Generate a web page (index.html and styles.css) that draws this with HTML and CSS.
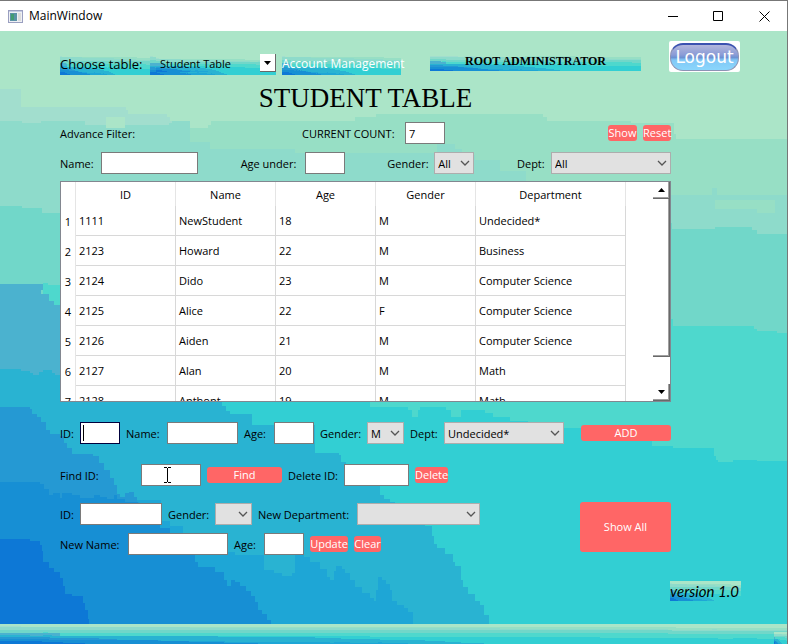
FILE: index.html
```html
<!DOCTYPE html>
<html lang="en">
<head>
<meta charset="utf-8">
<title>MainWindow</title>
<link rel="stylesheet" href="styles.css">
</head>
<body>
<svg class="defs" aria-hidden="true">
  <symbol id="wave" viewBox="0 31 787 593" preserveAspectRatio="none">
    <g shape-rendering="crispEdges">
      <rect y="31" width="787" height="593" fill="#abe5c8"/>
      <path fill="#a2dece" d="M0 89H21V107H126V110H128V114H167V117H170V121H172V130H0Z"/>
      <path fill="#97dfc5" d="M172 121H190V128H208V125H211V121H355V117H376V114H543V117H547V121H631V123H674V134H676V139H787V300H172Z"/>
      <path fill="#8edbcb" d="M0 121H22V123H41V121H85V125H169V123H172V121H190V142H210V149H295V153H437V144H455V149H462V155H475V160H500V171H526V181H668V195H712V188H717V195H787V300H0Z"/>
      <rect x="106" y="117" width="19" height="11" fill="#abe5c8"/>
      <path fill="#97dfc5" d="M715 200H775V213H757V209H715Z"/>
      <path fill="#71d7c9" d="M0 206H22V208H42V213H60V223H672V229H715V227H752V230H757V234H787V500H0Z"/>
      <path fill="#4ed8cd" d="M43 283H48V285H60V300H668V319H673V326H754V329H757V331H777V333H787V600H43Z"/>
      <path fill="#32cfd3" d="M60 395H370V407H408V410H412V417H418V410H420V407H446V410H451V417H461V410H485V413H493V417H510V421H528V424H563V428H600V435H652V446H673V448H714V456H716V460H718V462H733V460H757V461H787V624H60Z"/>
      <path fill="#4bb2cf" d="M0 284H43V290H41V294H49V301H54V305H60V400H0Z"/>
      <path fill="#29b3d2" d="M0 369H21V371H30V373H33V375H39V372H43V370H52V373H55V375H60V395H218V402H222V406H226V411H230V414H252V425H315V453H339V455H341V462H346V466H350V476H366V484H379V486H380V495H384V499H390V502H395V518H425V526H432V536H434V544H437V548H445V554H453V562H455V566H461V580H463V587H468V594H475V601H480V605H484V615H489V624H0Z"/>
      <path fill="#1ea6d6" d="M100 500H161V521H170V526H183V533H189V537H223V546H225V552H235V555H264V570H274V573H282V576H292V573H295V553H304V557H310V562H320V569H327V577H330V580H334V571H336V566H342V569H345V573H350V580H355V587H362V593H370V598H374V601H376V590H378V577H382V580H386V584H390V590H392V601H397V605H404V608H408V612H413V624H100Z"/>
      <path fill="#2599d3" d="M0 407H30V409H32V414H37V417H41V422H46V430H50V434H60V436H64V443H67V448H72V454H93V456H99V463H104V470H110V478H114V485H117V494H120V497H125V493H129V492H134V497H137V502H139V510H0Z"/>
      <path fill="#178fd4" d="M0 482H40V484H44V489H49V495H53V493H60V498H62V493H72V495H80V498H94V495H100V497H107V499H114V495H117V499H125V502H138V507H144V509H154V516H158V522H160V528H170V534H178V541H183V548H189V555H195V562H198V567H215V572H224V580H227V586H231V580H235V582H240V586H246V591H251V596H255V602H258V610H262V614H267V620H271V624H0Z"/>
      <path fill="#0d78d6" d="M0 539H30V541H40V545H42V551H43V562H49V568H54V572H60V578H63V586H65V594H72V596H83V603H85V610H88V619H89V624H0Z"/>
    </g>
  </symbol>
  <symbol id="chevron" viewBox="0 0 10 6"><path d="M1 1l4 4 4-4" fill="none" stroke="#555" stroke-width="1.3"/></symbol>
</svg>

<div class="window">
  <header class="titlebar">
    <svg class="app-icon" viewBox="0 0 15 13" aria-hidden="true">
      <rect x=".5" y=".5" width="14" height="12" fill="#eef0f4" stroke="#9a9fc0"/>
      <rect x="1" y="1" width="13" height="1" fill="#c4cbe4"/>
      <rect x="2" y="3" width="7" height="8" fill="#5b93a6"/>
      <rect x="3" y="4" width="3" height="6" fill="#439c72"/>
      <rect x="10" y="3" width="3" height="8" fill="#dcdcdc"/>
    </svg>
    <span class="caption">MainWindow</span>
    <button class="win-btn" aria-label="Minimize"><svg viewBox="0 0 11 11"><path d="M1 5.500H11"/></svg></button>
    <button class="win-btn" aria-label="Maximize"><svg viewBox="0 0 11 11"><path d="M.5 .5H9.500V9.500H.5Z"/></svg></button>
    <button class="win-btn" aria-label="Close"><svg viewBox="0 0 11 11"><path d="M.5 .5l10 10M10.500 .5l-10 10"/></svg></button>
  </header>

  <main class="body">
    <svg class="fill" aria-hidden="true"><use href="#wave"/></svg>

    <div class="top">
      <div class="strip choose"><svg class="fill" aria-hidden="true"><use href="#wave"/></svg><label for="table">Choose table:</label></div>
      <div class="strip combo">
        <svg class="fill" aria-hidden="true"><use href="#wave"/></svg>
        <svg class="combo-edit" aria-hidden="true"><use href="#wave"/></svg>
        <select id="table"><option>Student Table</option></select>
        <div class="drop"><svg viewBox="0 0 7 4"><path d="M0 0h7L3.500 4z"/></svg></div>
      </div>
      <a class="strip account" href="#account"><svg class="fill" aria-hidden="true"><use href="#wave"/></svg><span>Account Management</span></a>
      <div class="strip role"><svg class="fill" aria-hidden="true"><use href="#wave"/></svg><span>ROOT ADMINISTRATOR</span></div>
      <button class="logout"><span>Logout</span></button>
    </div>

    <div class="content">
      <h1>STUDENT TABLE</h1>

      <div class="row count-row">
        <span>Advance Filter:</span>
        <label for="count">CURRENT COUNT:</label>
        <input id="count" value="7">
        <button class="btn show">Show</button>
        <button class="btn">Reset</button>
      </div>

      <div class="filters">
        <div class="pair"><label for="f-name" class="l-name">Name:</label><input id="f-name" class="w-name"></div>
        <div class="pair"><label for="f-age" class="l-age">Age under:</label><input id="f-age" class="w-age"></div>
        <div class="pair"><label for="f-gender" class="l-gender">Gender:</label><div class="sel w-age"><select id="f-gender"><option>All</option></select><svg><use href="#chevron"/></svg></div></div>
        <div class="pair"><label for="f-dept" class="l-dept">Dept:</label><div class="sel w-dept"><select id="f-dept"><option>All</option></select><svg><use href="#chevron"/></svg></div></div>
      </div>

      <div class="table-view">
        <table>
          <colgroup><col class="c-num"><col class="c"><col class="c"><col class="c"><col class="c"><col class="c-dept"></colgroup>
          <thead><tr><th></th><th>ID</th><th>Name</th><th>Age</th><th>Gender</th><th>Department</th></tr></thead>
          <tbody>
            <tr><th>1</th><td>1111</td><td>NewStudent</td><td>18</td><td>M</td><td>Undecided*</td></tr>
            <tr><th>2</th><td>2123</td><td>Howard</td><td>22</td><td>M</td><td>Business</td></tr>
            <tr><th>3</th><td>2124</td><td>Dido</td><td>23</td><td>M</td><td>Computer Science</td></tr>
            <tr><th>4</th><td>2125</td><td>Alice</td><td>22</td><td>F</td><td>Computer Science</td></tr>
            <tr><th>5</th><td>2126</td><td>Aiden</td><td>21</td><td>M</td><td>Computer Science</td></tr>
            <tr><th>6</th><td>2127</td><td>Alan</td><td>20</td><td>M</td><td>Math</td></tr>
            <tr><th>7</th><td>2128</td><td>Anthont</td><td>19</td><td>M</td><td>Math</td></tr>
          </tbody>
        </table>
        <div class="scroll">
          <button aria-label="Scroll up"><svg viewBox="0 0 7 4"><path d="M0 4h7L3.500 0z"/></svg></button>
          <div class="thumb"></div>
          <div class="track"></div>
          <button aria-label="Scroll down"><svg viewBox="0 0 7 4"><path d="M0 0h7L3.500 4z"/></svg></button>
        </div>
      </div>

      <div class="row add-row">
        <label for="a-id">ID:</label><div class="caret"><input id="a-id" class="focused"></div>
        <label for="a-name">Name:</label><input id="a-name">
        <label for="a-age">Age:</label><input id="a-age">
        <label for="a-gender">Gender:</label><div class="sel"><select id="a-gender"><option>M</option></select><svg><use href="#chevron"/></svg></div>
        <label for="a-dept">Dept:</label><div class="sel"><select id="a-dept"><option>Undecided*</option></select><svg><use href="#chevron"/></svg></div>
        <button class="btn add">ADD</button>
      </div>

      <div class="row find-row">
        <label for="find">Find ID:</label>
        <div class="pointer"><input id="find"><svg viewBox="0 0 7 16" aria-hidden="true"><path d="M0 .5H3M4 .5H7M3.500 1V15M0 15.500H3M4 15.500H7"/></svg></div>
        <button class="btn">Find</button>
        <label for="del">Delete ID:</label><input id="del">
        <button class="btn">Delete</button>
      </div>

      <div class="update">
        <div class="update-rows">
          <div class="row up1">
            <label for="u-id">ID:</label><input id="u-id">
            <label for="u-gender">Gender:</label><div class="sel"><select id="u-gender"><option></option></select><svg><use href="#chevron"/></svg></div>
            <label for="u-dept">New Department:</label><div class="sel"><select id="u-dept"><option></option></select><svg><use href="#chevron"/></svg></div>
          </div>
          <div class="row up2">
            <label for="u-name">New Name:</label><input id="u-name">
            <label for="u-age">Age:</label><input id="u-age">
            <button class="btn">Update</button>
            <button class="btn">Clear</button>
          </div>
        </div>
        <button class="btn show-all">Show All</button>
      </div>
    </div>

    <div class="strip version"><svg class="fill" aria-hidden="true"><use href="#wave"/></svg><span>version 1.0</span></div>
  </main>

  <footer class="statusbar">
    <svg class="fill" aria-hidden="true"><use href="#wave"/></svg>
    <svg class="grip" aria-hidden="true"><use href="#wave"/></svg>
  </footer>
</div>
</body>
</html>
```
FILE: styles.css
```css
* { box-sizing: border-box; }

body {
  margin: 0;
  font: 11px/16px "Open Sans", "Noto Sans", sans-serif;
  color: #000;
}

.defs { position: absolute; width: 0; height: 0; }

button, input, select { font: inherit; color: inherit; margin: 0; border-radius: 0; }

.window {
  min-height: 100vh;
  display: flex;
  flex-direction: column;
  border-top: 1px solid #777;
  border-right: 1px solid #777;
}

/* Title bar */
.titlebar {
  display: flex;
  align-items: center;
  height: 30px;
  padding-left: 8px;
  background: #fff;
}
.app-icon { width: 15px; height: 13px; }
.caption { flex: 1; margin-left: 6px; font-size: 12px; }
.win-btn {
  width: 46px;
  height: 29px;
  padding: 0;
  border: 0;
  background: none;
}
.win-btn svg { display: block; width: 11px; height: 11px; margin: 0 auto; }
.win-btn path { fill: none; stroke: #000; }

/* Painted surfaces */
.body { position: relative; flex: 1; padding: 10px 46px 0 60px; }
.fill { position: absolute; inset: 0; width: 100%; height: 100%; }
.strip { position: relative; white-space: nowrap; }
.strip > span, .strip > label { position: relative; }

/* Top row */
.top {
  position: relative;
  display: flex;
  align-items: flex-start;
  height: 34px;
  padding-right: 1px;
}
.top .strip { margin-top: 13px; height: 21px; line-height: 20px; }
.choose { width: 90px; font-size: 13px; }
.combo { width: 126px; margin-right: 6px; }
.combo-edit { position: absolute; left: 6px; top: 3px; width: 104px; height: 15px; }
.combo select {
  position: relative;
  display: block;
  width: 100%;
  height: 20px;
  padding: 0 10px;
  border: 0;
  background: none;
  appearance: none;
}
.drop {
  position: absolute;
  right: 0;
  top: 0;
  width: 16px;
  height: 18px;
  background: #fff;
  border: solid #696969;
  border-width: 0 1px 1px 0;
  pointer-events: none;
}
.drop svg { display: block; width: 7px; height: 4px; margin: 7px auto 0; }
.account { width: 119px; color: #fff; font-size: 12px; text-decoration: none; }
.top .role {
  flex: 1;
  height: 17px;
  margin: 13px 28px 0 29px;
  text-align: center;
  font: 900 12px/14px "Liberation Serif", serif;
}
.logout {
  width: 71px;
  height: 31px;
  padding: 1px;
  border: 0;
  border-radius: 2px;
  background: #fff;
}
.logout span {
  display: block;
  height: 28px;
  border: 1px solid #8d93b4;
  border-top: 2px solid #3b52b0;
  border-radius: 13px;
  background: linear-gradient(#b3b6dc, #8a9bd6 40%, #6d92d2 50%, #82c8f6 60%, #8ad6fc);
  color: #fff;
  font: 17px/24px "DejaVu Sans", sans-serif;
}

/* Content */
.content { position: relative; margin-right: 70px; }
h1 {
  margin: 0;
  height: 47px;
  font: 400 27px/47px "Liberation Serif", serif;
  text-align: center;
}
.row { display: grid; align-items: center; gap: 6px; }
label, .row > span { white-space: nowrap; }
.row > label, .row > span, .pair > label { padding-top: 2px; }

input {
  display: block;
  width: 100%;
  height: 22px;
  padding: 1px 3px 0;
  border: 1px solid #7a7a7a;
  background: #fff;
  outline: 0;
}
input.focused { border-color: #00003c; }
.sel { position: relative; }
.sel select {
  display: block;
  width: 100%;
  height: 22px;
  padding: 2px 3px 0;
  border: 1px solid #adadad;
  background: #e1e1e1;
  appearance: none;
}
.sel svg {
  position: absolute;
  right: 4px;
  top: 8px;
  width: 10px;
  height: 6px;
  pointer-events: none;
}

.btn {
  height: 16px;
  padding: 0;
  border: 0;
  border-radius: 3px;
  background: #ff6666;
  color: #fff;
  line-height: 16px;
  white-space: nowrap;
}

.count-row { grid-template-columns: 236px 97px 40px 1fr 28px; }
.show { width: 29px; justify-self: end; }

.filters { display: flex; justify-content: space-between; margin: 8px 0 7px; }
.pair { display: flex; align-items: center; gap: 6px; }
.l-name { width: 35px; }
.l-age { width: 58px; }
.l-gender { width: 41px; }
.l-dept { width: 28px; }
.w-name { width: 97px; }
.w-age { width: 40px; }
.w-dept { width: 120px; }

/* Table */
.table-view {
  display: flex;
  justify-content: space-between;
  height: 221px;
  overflow: hidden;
  border: 1px solid #828790;
  background: #fff;
}
table { width: 565px; table-layout: fixed; border-collapse: separate; border-spacing: 0; }
.c-num { width: 15px; }
.c { width: 100px; }
.c-dept { width: 150px; }
th { padding: 2px 0 0; font-weight: 400; border-right: 1px solid #e5e5e5; }
thead th { height: 24px; }
td {
  height: 30px;
  padding: 0 3px;
  border: solid #d8d8d8;
  border-width: 0 1px 1px 0;
}
.scroll { display: flex; flex-direction: column; width: 17px; }
.scroll button, .thumb {
  padding: 0;
  border: solid #696969;
  border-width: 0 1px 1px 0;
  background: #fff;
  box-shadow: inset -1px -1px #a0a0a0;
}
.scroll button { height: 17px; }
.scroll svg { display: block; width: 7px; height: 4px; margin: 0 auto; }
.thumb { flex: 158; }
.track { flex: 27; }

/* Forms */
.add-row {
  margin-top: 20px;
  grid-template-columns: 14px 40px 35px 71px 24px 40px 41px 37px 28px 120px 1fr;
}
.add { width: 90px; justify-self: end; }
.caret, .pointer { position: relative; }
.caret::after {
  content: "";
  position: absolute;
  left: 3px;
  top: 3px;
  width: 1px;
  height: 16px;
  background: #000;
}
.find-row { margin-top: 20px; grid-template-columns: 75px 60px 75px 50px 65px 33px; }
.pointer svg { position: absolute; left: 23px; top: 3px; width: 7px; height: 16px; }
.pointer path { fill: none; stroke: #000; }

.update { display: flex; justify-content: space-between; align-items: flex-start; margin-top: 16px; }
.up1 { margin-top: 1px; grid-template-columns: 14px 82px 41px 37px 93px 123px; }
.up2 { margin-top: 8px; grid-template-columns: 62px 100px 24px 40px 38px 27px; }
.show-all { width: 91px; height: 50px; }

.version {
  width: 71px;
  height: 20px;
  margin: 26px 0 22px auto;
  font: italic 15px/20px Lato, sans-serif;
}

.statusbar { position: relative; height: 20px; }
.grip { position: absolute; right: 0; bottom: 0; width: 13px; height: 12px; }
```
